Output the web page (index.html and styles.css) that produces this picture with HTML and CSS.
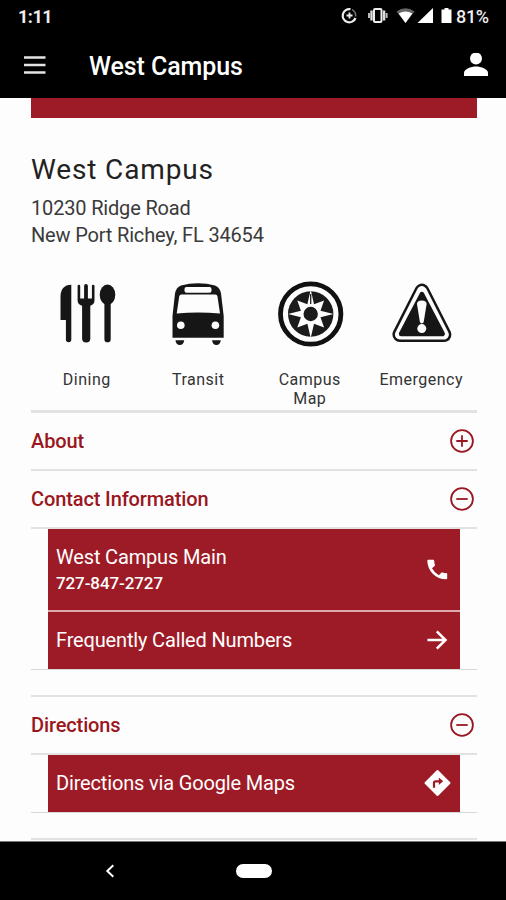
FILE: index.html
```html
<!DOCTYPE html>
<html lang="en">
<head>
    <meta charset="UTF-8">
    <meta name="viewport" content="width=device-width, initial-scale=1.0">
    <title>West Campus</title>
    <link rel="stylesheet" href="styles.css">
</head>
<body>
    <div class="status">
        <span class="time">1:11</span>
        <svg class="status-icons" width="114" height="20" viewBox="0 0 114 20" fill="#eee">
            <!-- data saver -->
            <path d="M11.500 3.200A6.600 6.600 0 1 0 16.500 12" fill="none" stroke="#eee" stroke-width="2.200"/>
            <path d="M13 3.600A6.600 6.600 0 0 1 16.600 10.500" fill="none" stroke="#777" stroke-width="1.600"/>
            <path d="M10.500 6.500v6M7.500 9.500h6" stroke="#eee" stroke-width="1.800"/>
            <!-- vibrate -->
            <rect x="35" y="3" width="7.500" height="13" rx="1" fill="none" stroke="#eee" stroke-width="2"/>
            <path d="M32.500 4.500v10M45.100 4.500v10" stroke="#ddd" stroke-width="2.400"/>
            <path d="M30 7v5M47.600 7v5" stroke="#bbb" stroke-width="2"/>
            <!-- wifi -->
            <path d="M57.500 5.500Q66.500-.8 75.500 5.500L66.500 17Z" fill="#666"/>
            <path d="M59.700 7.600Q66.500 3.200 73.300 7.600L66.500 17Z" fill="#fff"/>
            <!-- signal, battery -->
            <path d="M78.500 17L94 2v15Z" fill="#fff"/>
            <path d="M102.500 3.500h3V2h4v1.500h3V17h-10Z" fill="#fff"/>
        </svg>
        <span class="battery">81%</span>
    </div>

    <header class="appbar">
        <svg width="22" height="20" viewBox="0 0 22 20">
            <path d="M0 2.500h21.500M0 10h21.500M0 17.500h21.500" stroke="#e4e4e4" stroke-width="2.300"/>
        </svg>
        <h1>West Campus</h1>
        <svg width="24" height="24" viewBox="0 0 24 24" fill="#fff">
            <circle cx="12" cy="5.500" r="6"/>
            <path d="M0 23v-3C0 16 7 13.500 12 13.500s12 2.500 12 6.500V23Z"/>
        </svg>
    </header>

    <main>
        <div class="banner"></div>
        <h2>West Campus</h2>
        <p class="address">10230 Ridge Road<br>New Port Richey, FL 34654</p>

        <div class="links">
            <a class="link">
                <svg width="68" height="68" viewBox="0 0 68 68" fill="#161616">
                    <path d="M18.300 4.700V59.500a2.700 2.700 0 0 1-5.400 0V40H7.500V17C7.500 9.500 11 4.700 18.300 4.700Z"/>
                    <path d="M24.600 6a1.300 1.300 0 0 1 2.600 0v12.500h3.900V6a1.900 1.900 0 0 1 3.800 0v12.500h4V6a1.300 1.300 0 0 1 2.600 0v14.500c0 3-2 4.300-4.200 5.200V58.500a4.100 4.100 0 0 1-8.200 0V25.700c-2.500-.9-4.500-2.200-4.500-5.200Z"/>
                    <ellipse cx="54.500" cy="14.700" rx="7.800" ry="10.200"/>
                    <path d="M51.400 22h6.300v37.200a3.100 3.100 0 0 1-6.300 0Z"/>
                </svg>
                <span>Dining</span>
            </a>
            <a class="link">
                <svg width="68" height="68" viewBox="0 0 68 68" fill="#161616">
                    <path d="M8.500 57.700V36L11 13.500Q12 7.500 17 5.500 25 3.200 34 3.200t17 2.300q5 2 6 8L59.700 36V57.700Z"/>
                    <rect x="20.500" y="6.900" width="27" height="5.900" rx="2" fill="#fdfdfd"/>
                    <path d="M17.500 14.500H51.200q2 0 2.300 2L56 33.500Q34 31.500 12.700 33.500L15.200 16.500q.3-2 2.300-2Z" fill="#fdfdfd"/>
                    <circle cx="16.800" cy="45.300" r="3.800" fill="#fdfdfd"/>
                    <circle cx="51.400" cy="45.300" r="3.800" fill="#fdfdfd"/>
                    <path d="M11.500 60.200h8.700q-.5 4.800-4.400 4.800t-4.300-4.800ZM48.100 60.200h8.700q-.5 4.800-4.400 4.800t-4.300-4.800Z"/>
                </svg>
                <span>Transit</span>
            </a>
            <a class="link">
                <svg width="68" height="68" viewBox="0 0 68 68">
                    <circle cx="34.700" cy="34" r="30.200" fill="none" stroke="#111" stroke-width="4.800"/>
                    <circle cx="34.700" cy="34" r="22.700" fill="#1b1b1b"/>
                    <path d="M34.700 9.500L38 24.200 48.100 20.600 44.500 30.700 57.500 34 44.500 37.300 48.100 47.400 38 43.800 34.700 58 31.400 43.800 21.300 47.400 24.900 37.300 12 34 24.900 30.700 21.300 20.600 31.400 24.200Z" fill="#fdfdfd"/>
                    <path d="M34.700 14v10" stroke="#222" stroke-width="1.300"/>
                    <circle cx="34.700" cy="34" r="7.200" fill="#1b1b1b"/>
                </svg>
                <span>Campus<br>Map</span>
            </a>
            <a class="link">
                <svg width="68" height="68" viewBox="0 0 68 68">
                    <path d="M34.900 11L57 54.600H12.800Z" fill="#161616" stroke="#161616" stroke-width="14.800" stroke-linejoin="round"/>
                    <path d="M34.900 11L57 54.600H12.800Z" fill="#161616" stroke="#fdfdfd" stroke-width="9.800" stroke-linejoin="round"/>
                    <path d="M34.900 14L55.700 53.900H14.100Z" fill="#161616" stroke="#161616" stroke-width="4.500" stroke-linejoin="round"/>
                    <path d="M30 24q0-3.500 4.800-3.500t4.800 3.500l-2.800 17.500q-.5 2-2 2t-2-2Z" fill="#fdfdfd"/>
                    <circle cx="34.800" cy="48.600" r="4.500" fill="#fdfdfd"/>
                </svg>
                <span>Emergency</span>
            </a>
        </div>

        <section>
            <h3>About
                <svg width="24" height="24" viewBox="0 0 24 24" fill="none" stroke="#9a1620" stroke-width="1.800">
                    <circle cx="12" cy="12" r="10.900"/>
                    <path d="M6.300 12h11.400M12 6.300v11.400"/>
                </svg>
            </h3>
        </section>

        <section>
            <h3>Contact Information
                <svg width="24" height="24" viewBox="0 0 24 24" fill="none" stroke="#9a1620" stroke-width="1.800">
                    <circle cx="12" cy="12" r="10.900"/>
                    <path d="M6.300 12h11.400"/>
                </svg>
            </h3>
            <div class="panel">
                <a class="item tall">
                    <span>West Campus Main<small>727-847-2727</small></span>
                    <svg width="28" height="28" viewBox="0 0 28 28" fill="#fff">
                        <path d="M4.700 3.800h5.600q.9 0 .9.900 0 2 .7 4 .2.700-.3 1.200L9 12.300q2.500 4.600 6.800 6.900l2.500-2.500q.5-.5 1.200-.3 2 .7 3.700.7 1 0 1 1v4.200q0 1-1 1C13 23.300 4.500 15 4.300 4.700q0-.9.900-.9Z"/>
                    </svg>
                </a>
                <a class="item">
                    <span>Frequently Called Numbers</span>
                    <svg width="28" height="28" viewBox="0 0 28 28" fill="none" stroke="#fff" stroke-width="2.500">
                        <path d="M4.500 14h18M13.800 5.300l8.700 8.700-8.700 8.700"/>
                    </svg>
                </a>
            </div>
        </section>

        <section>
            <h3>Directions
                <svg width="24" height="24" viewBox="0 0 24 24" fill="none" stroke="#9a1620" stroke-width="1.800">
                    <circle cx="12" cy="12" r="10.900"/>
                    <path d="M6.300 12h11.400"/>
                </svg>
            </h3>
            <div class="panel">
                <a class="item">
                    <span>Directions via Google Maps</span>
                    <svg width="28" height="28" viewBox="0 0 28 28">
                        <path d="M14.500 2L26.500 14 14.500 26 2.500 14Z" fill="#fff" stroke="#fff" stroke-width="2" stroke-linejoin="round"/>
                        <path d="M11 18.800v-5q0-1.500 1.500-1.500h4" fill="none" stroke="#9d1b26" stroke-width="2.200"/>
                        <path d="M15.800 8.500l4.400 3.800-4.400 3.700Z" fill="#9d1b26"/>
                    </svg>
                </a>
            </div>
        </section>

        <section></section>
    </main>

    <nav class="navbar">
        <svg width="10" height="14" viewBox="0 0 10 14" fill="none" stroke="#fff" stroke-width="2">
            <path d="M8.300 1.200L2.300 7l6 5.800"/>
        </svg>
        <span class="home"></span>
    </nav>
</body>
</html>
```

FILE: styles.css
```css
* { box-sizing: border-box; }
body { display: flex; flex-direction: column; width: 506px; height: 900px; margin: 0; overflow: hidden; background: #fdfdfd; color: #222; font-family: Roboto, sans-serif; }
h1, h2, h3, p { margin: 0; white-space: nowrap; }
svg { display: block; flex: none; }

.status { display: flex; align-items: center; flex: none; height: 32px; padding: 0 16px 0 18px; background: #000; color: #eee; font-size: 18px; font-weight: 500; }
.status-icons { margin-left: auto; }
.time { letter-spacing: -0.5px; font-weight: 700; }
.battery { width: 34px; margin-left: 3px; letter-spacing: -0.3px; }

.appbar { display: flex; align-items: center; flex: none; height: 66px; padding: 0 18px 0 24px; background: #000; color: #fff; }
.appbar h1 { flex: 1; padding-top: 3px; margin-left: 43px; font-size: 25px; font-weight: 500; line-height: 30px; letter-spacing: -0.1px; }

main { flex: none; height: 743px; padding: 0 29px 0 31px; overflow: hidden; }
.banner { height: 20px; background: #9d1b26; }
h2 { margin-top: 35px; font-size: 28px; font-weight: 400; line-height: 34px; letter-spacing: 0.85px; }
.address { margin-top: 8px; font-size: 20px; line-height: 27px; letter-spacing: -0.17px; color: #3a3a3a; }

.links { display: grid; grid-template-columns: repeat(4, 1fr); height: 130px; margin-top: 31px; }
.link { display: flex; flex-direction: column; align-items: center; text-align: center; font-size: 16px; line-height: 19px; color: #333; }
.link span { margin-top: 22px; letter-spacing: 0.5px; }

section { border-top: 2px solid #e2e2e2; }
.links + section { border-top-width: 3px; }
h3 { display: flex; align-items: center; justify-content: space-between; height: 56px; padding-right: 3px; color: #9a1620; font-size: 20px; font-weight: 500; letter-spacing: -0.12px; }
.panel { margin-bottom: 25px; padding: 0 17px; border-top: 2px solid #e2e2e2; border-bottom: 1px solid #d8d8d8; }
.item { display: flex; align-items: center; justify-content: space-between; height: 57px; padding: 0 9px 2px 8px; background: #9d1b26; color: #fff; font-size: 20px; letter-spacing: -0.16px; white-space: nowrap; }
.tall { height: 83px; padding-bottom: 0; border-bottom: 2px solid #dda9ad; }
.tall span { padding-top: 3px; }
.item small { display: block; font-size: 17px; font-weight: 500; line-height: 28px; letter-spacing: -0.1px; }

.navbar { display: flex; align-items: center; flex: none; height: 59px; padding-left: 105px; border-top: 1px solid #777; background: #000; }
.home { width: 36px; height: 14px; margin-left: 121px; border-radius: 7px; background: #fff; }
```
